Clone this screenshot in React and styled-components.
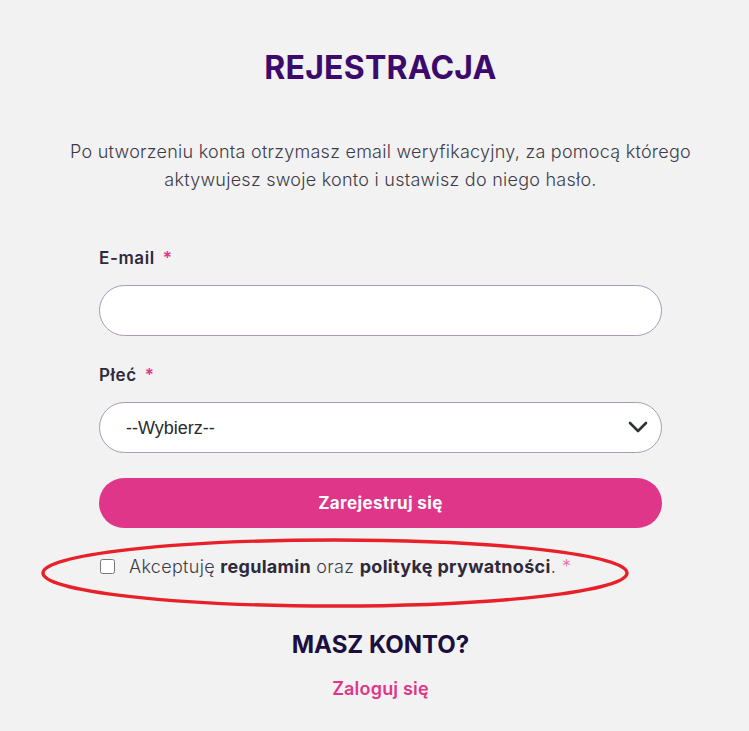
import React from "react";
import styled, { createGlobalStyle } from "styled-components";

const Global = createGlobalStyle`
  html, body { margin: 0; padding: 0; background: #f1f2f1; }
  body { font-family: Inter, "Noto Sans", sans-serif; }
  * { box-sizing: border-box; }
`;

const Page = styled.div`
  position: relative;
  width: 749px;
  height: 731px;
  padding-left: 12px;
  overflow: hidden;
  display: flex;
  flex-direction: column;
  align-items: center;
`;

const Title = styled.h1`
  margin: 46px 0 0;
  font-family: Inter, sans-serif;
  font-weight: 700;
  font-size: 32px;
  line-height: 44px;
  letter-spacing: 0.2px;
  color: #3b0a6c;
`;

const Intro = styled.p`
  margin: 48px 0 0;
  text-align: center;
  font-weight: 300;
  font-size: 18px;
  line-height: 28px;
  letter-spacing: 0.25px;
  color: #3f3b4a;
`;

const Form = styled.form`
  width: 563px;
  margin-top: 52px;
  display: flex;
  flex-direction: column;
`;

const Label = styled.label`
  font-weight: 600;
  font-size: 17px;
  line-height: 24px;
  letter-spacing: 0.6px;
  color: #2e2a3c;
  margin-bottom: 15px;
`;

const Req = styled.span`
  color: #e0368a;
  margin-left: 8px;
`;

const Input = styled.input`
  height: 51px;
  border: 1px solid #a89bb8;
  border-radius: 26px;
  background: #fff;
  padding: 0 26px;
  font-size: 17px;
  outline: none;
  margin-bottom: 27px;
`;

const SelectWrap = styled.div`
  position: relative;
  margin-bottom: 25px;
`;

const Select = styled.select`
  appearance: none;
  width: 100%;
  height: 51px;
  border: 1px solid #a89bb8;
  border-radius: 26px;
  background: #fff;
  padding: 0 26px;
  font-family: "Liberation Sans", Arial, sans-serif;
  font-size: 18px;
  color: #2b2b2b;
  outline: none;
`;

const Chevron = styled.svg`
  position: absolute;
  right: 13px;
  top: 18px;
  pointer-events: none;
`;

const Submit = styled.button`
  height: 50px;
  border: none;
  border-radius: 25px;
  background: #e0368a;
  color: #fff;
  font-family: Inter, sans-serif;
  font-weight: 700;
  font-size: 17px;
  letter-spacing: 0.4px;
`;

const ConsentRow = styled.div`
  display: flex;
  align-items: center;
  gap: 14px;
  margin-top: 28px;
  font-weight: 300;
  font-size: 18px;
  letter-spacing: 0.3px;
  color: #3f3b4a;
`;

const Box = styled.input`
  width: 15px;
  height: 15px;
  margin: 0 0 0 1px;
`;

const Strong = styled.b`
  font-weight: 700;
  color: #2e2a3c;
`;

const Star = styled.span`
  color: #ea6ea8;
  margin-left: 6px;
`;

const SubTitle = styled.h2`
  margin: 52px 0 0;
  font-weight: 700;
  font-size: 24px;
  line-height: 32px;
  color: #1b0f3f;
`;

const LoginLink = styled.a`
  margin-top: 17px;
  font-weight: 600;
  font-size: 18px;
  letter-spacing: 0.2px;
  color: #e0368a;
  text-decoration: none;
`;

const Ellipse = styled.svg`
  position: absolute;
  left: 0;
  top: 0;
  pointer-events: none;
`;

export default function App() {
  return (
    <Page>
      <Global />
      <Title>REJESTRACJA</Title>
      <Intro>
        Po utworzeniu konta otrzymasz email weryfikacyjny, za pomocą którego
        <br />
        aktywujesz swoje konto i ustawisz do niego hasło.
      </Intro>
      <Form onSubmit={(e) => e.preventDefault()}>
        <Label>
          E-mail<Req>*</Req>
        </Label>
        <Input type="email" />
        <Label>
          Płeć<Req>*</Req>
        </Label>
        <SelectWrap>
          <Select defaultValue="">
            <option value="">--Wybierz--</option>
            <option value="k">Kobieta</option>
            <option value="m">Mężczyzna</option>
          </Select>
          <Chevron width="22" height="14" viewBox="0 0 22 14">
            <path d="M3 3 L11 11 L19 3" fill="none" stroke="#2f3336" strokeWidth="2.6" strokeLinecap="round" strokeLinejoin="round" />
          </Chevron>
        </SelectWrap>
        <Submit type="submit">Zarejestruj się</Submit>
        <ConsentRow>
          <Box type="checkbox" />
          <span>
            Akceptuję <Strong>regulamin</Strong> oraz <Strong>politykę prywatności</Strong>.<Star>*</Star>
          </span>
        </ConsentRow>
      </Form>
      <SubTitle>MASZ KONTO?</SubTitle>
      <LoginLink href="#">Zaloguj się</LoginLink>
      <Ellipse width="749" height="731" viewBox="0 0 749 731">
        <ellipse cx="335" cy="573" rx="292" ry="33" fill="none" stroke="#e8202a" strokeWidth="3.4" />
      </Ellipse>
    </Page>
  );
}
